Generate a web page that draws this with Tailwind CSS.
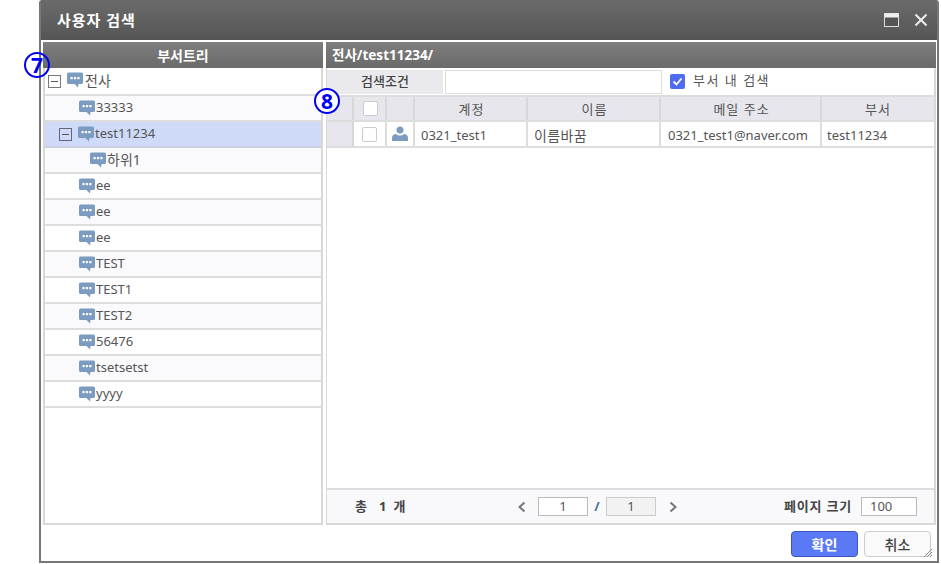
<!DOCTYPE html>
<html lang="ko">
<head>
  <meta charset="UTF-8"/>
  <title>사용자 검색</title>
  <script src="https://cdn.jsdelivr.net/npm/@tailwindcss/browser@4"></script>
</head>
<body class="bg-white w-[941px] h-[564px] overflow-hidden relative font-['Noto_Sans','Noto_Sans_CJK_KR',sans-serif] text-[13px] text-[#555]">
  <svg width="0" height="0" class="absolute">
    <symbol id="chat" viewBox="0 0 16 16">
      <path d="M1.500 0.500h13a1.500 1.500 0 0 1 1.500 1.500v8.500a1.500 1.500 0 0 1-1.500 1.500h-3l-.5 3.500-3.500-3.500h-6a1.500 1.500 0 0 1-1.500-1.500v-8.500a1.500 1.500 0 0 1 1.500-1.500z" fill="#7b9cc0"/>
      <rect x="3.500" y="5" width="2.200" height="2.200" fill="#fff"/><rect x="6.900" y="5" width="2.200" height="2.200" fill="#fff"/><rect x="10.300" y="5" width="2.200" height="2.200" fill="#fff"/>
    </symbol>
  </svg>

  <!-- Dialog -->
  <div class="ml-[39px] w-[900px] h-[563px] border-2 border-t-0 border-[#777] rounded-t-[3px] bg-white flex flex-col">
    <div class="h-[40px] shrink-0 bg-gradient-to-b from-[#6b6b6b] to-[#555] flex items-center justify-between pl-[16px] pr-[9px]">
      <span class="text-white font-bold text-[15px] tracking-[1px]">사용자 검색</span>
      <div class="flex items-center gap-[15px]">
        <svg width="15" height="14" viewBox="0 0 15 14"><rect x="0.500" y="0.500" width="14" height="13" fill="#555" stroke="#ddd"/><rect x="0.500" y="0.500" width="14" height="4" fill="#eee"/></svg>
        <svg width="14" height="14" viewBox="0 0 14 14"><path d="M1.500 1.500l11 11M12.500 1.500l-11 11" stroke="#eee" stroke-width="2"/></svg>
      </div>
    </div>

    <div class="flex-1 flex gap-[3px] pl-[2px] pr-px pt-[2px]">
      <!-- Tree -->
      <div class="w-[280px] shrink-0 h-[483px] border-2 border-t-0 border-[#d8d8d8] flex flex-col">
        <div class="h-[26px] -mx-[2px] shrink-0 bg-gradient-to-b from-[#7e7e7e] to-[#6a6a6a] text-white font-bold text-[14px] flex items-center justify-center">부서트리</div>
        <div class="h-[28px] shrink-0 border-b-2 border-[#ddd] flex items-center pl-[3px]">
          <span class="w-[13px] h-[13px] border border-[#777] flex items-center justify-center mr-[6px]"><span class="w-[7px] h-px bg-[#555]"></span></span>
          <svg width="16" height="16" class="mt-[-2px]"><use href="#chat"/></svg><span class="text-[14px] ml-[2px] -mt-[2px]">전사</span>
        </div>
        <div class="h-[26px] border-b-2 border-[#ddd] bg-[#fafafc] flex items-center pl-[34px]"><svg width="16" height="16"><use href="#chat"/></svg><span class="ml-px">33333</span></div>
        <div class="h-[26px] border-b-2 border-[#c9cfe0] bg-[#cfdaf8] flex items-center pl-[14px]">
          <span class="w-[13px] h-[13px] border border-[#667] flex items-center justify-center mr-[6px]"><span class="w-[7px] h-px bg-[#555]"></span></span>
          <svg width="16" height="16"><use href="#chat"/></svg><span class="ml-px">test11234</span>
        </div>
        <div class="h-[26px] border-b-2 border-[#ddd] bg-[#fafafc] flex items-center pl-[45px]"><svg width="16" height="16"><use href="#chat"/></svg><span class="ml-px text-[14px] -mt-[2px]">하위1</span></div>
        <div class="h-[26px] border-b-2 border-[#ddd] bg-white flex items-center pl-[34px]"><svg width="16" height="16"><use href="#chat"/></svg><span class="ml-px">ee</span></div>
        <div class="h-[26px] border-b-2 border-[#ddd] bg-[#fafafc] flex items-center pl-[34px]"><svg width="16" height="16"><use href="#chat"/></svg><span class="ml-px">ee</span></div>
        <div class="h-[26px] border-b-2 border-[#ddd] bg-white flex items-center pl-[34px]"><svg width="16" height="16"><use href="#chat"/></svg><span class="ml-px">ee</span></div>
        <div class="h-[26px] border-b-2 border-[#ddd] bg-[#fafafc] flex items-center pl-[34px]"><svg width="16" height="16"><use href="#chat"/></svg><span class="ml-px">TEST</span></div>
        <div class="h-[26px] border-b-2 border-[#ddd] bg-white flex items-center pl-[34px]"><svg width="16" height="16"><use href="#chat"/></svg><span class="ml-px">TEST1</span></div>
        <div class="h-[26px] border-b-2 border-[#ddd] bg-[#fafafc] flex items-center pl-[34px]"><svg width="16" height="16"><use href="#chat"/></svg><span class="ml-px">TEST2</span></div>
        <div class="h-[26px] border-b-2 border-[#ddd] bg-white flex items-center pl-[34px]"><svg width="16" height="16"><use href="#chat"/></svg><span class="ml-px">56476</span></div>
        <div class="h-[26px] border-b-2 border-[#ddd] bg-[#fafafc] flex items-center pl-[34px]"><svg width="16" height="16"><use href="#chat"/></svg><span class="ml-px">tsetsetst</span></div>
        <div class="h-[26px] border-b-2 border-[#ddd] bg-white flex items-center pl-[34px]"><svg width="16" height="16"><use href="#chat"/></svg><span class="ml-px">yyyy</span></div>
      </div>

      <!-- Right panel -->
      <div class="w-[610px] shrink-0 h-[483px] border-r-2 border-l border-b-2 border-[#d8d8d8] flex flex-col">
        <div class="h-[26px] -ml-px -mr-[2px] shrink-0 bg-gradient-to-b from-[#7e7e7e] to-[#6a6a6a] text-white font-bold text-[13.500px] flex items-center pl-[6px]">전사/test11234/</div>
        <div class="h-[27px] shrink-0 flex items-center">
          <div class="w-[116px] h-[24px] bg-[#eaeaee] text-[#444] font-medium flex items-center justify-center">검색조건</div>
          <div class="w-[217px] h-[24px] ml-[2px] border border-[#ddd] bg-white"></div>
          <span class="ml-[8px] w-[15px] h-[15px] rounded-[2px] bg-[#4f6cf0] flex items-center justify-center">
            <svg width="11" height="11" viewBox="0 0 11 11"><path d="M1.500 5.500l3 3 5-6" fill="none" stroke="#fff" stroke-width="1.800"/></svg>
          </span>
          <span class="ml-[8px] tracking-[1.500px] -mt-[2px]">부서 내 검색</span>
        </div>
        <!-- Grid -->
        <div class="grid grid-cols-[27px_33px_28px_113px_133px_161px_112px] w-[607px] border-y-2 border-[#ddd] text-[#555]">
          <div class="h-[23px] bg-[#e6e6ec] border-r-2 border-[#d8d8d8]"></div>
          <div class="h-[23px] bg-[#e6e6ec] border-r-2 border-[#d8d8d8] flex items-center justify-center pl-px"><span class="w-[15px] h-[15px] rounded-[2px] border border-[#ccc] bg-white"></span></div>
          <div class="h-[23px] bg-[#e6e6ec] border-r-2 border-[#d8d8d8]"></div>
          <div class="h-[23px] bg-[#e6e6ec] border-r-2 border-[#d8d8d8] flex items-center justify-center tracking-[1px] pt-[2px] pl-[2px]">계정</div>
          <div class="h-[23px] bg-[#e6e6ec] border-r-2 border-[#d8d8d8] flex items-center justify-center tracking-[1px] pt-[2px] pl-[2px]">이름</div>
          <div class="h-[23px] bg-[#e6e6ec] border-r-2 border-[#d8d8d8] flex items-center justify-center tracking-[1px] pt-[2px] pl-[2px]">메일 주소</div>
          <div class="h-[23px] bg-[#e6e6ec] border-[#d8d8d8] flex items-center justify-center tracking-[1px] pt-[2px]">부서</div>
        </div>
        <div class="grid grid-cols-[27px_33px_28px_113px_133px_161px_112px] w-[607px] border-b-2 border-[#ddd]">
          <div class="h-[24px] bg-[#e6e6ec] border-r-2 border-[#d8d8d8]"></div>
          <div class="h-[24px] border-r-2 border-[#ddd] flex items-center justify-center"><span class="w-[15px] h-[15px] rounded-[2px] border border-[#ccc] bg-white"></span></div>
          <div class="h-[24px] border-r-2 border-[#ddd] flex items-center justify-center">
            <svg width="16" height="16" viewBox="0 0 16 16"><circle cx="8" cy="4" r="3.500" fill="#7b9cc0"/><path d="M0 15v-3c0-2.500 2-4 4-4 1 1 2.500 1.500 4 1.500s3-.5 4-1.500c2 0 4 1.500 4 4v3z" fill="#7b9cc0"/></svg>
          </div>
          <div class="h-[24px] border-r-2 border-[#ddd] flex items-center pl-[6px] pt-[4px]">0321_test1</div>
          <div class="h-[24px] border-r-2 border-[#ddd] flex items-center pl-[6px] pt-[2px] text-[14px] tracking-[0.400px]">이름바꿈</div>
          <div class="h-[24px] border-r-2 border-[#ddd] flex items-center pl-[7px] pt-[4px]">0321_test1@naver.com</div>
          <div class="h-[24px] flex items-center pl-[5px] pt-[4px]">test11234</div>
        </div>
        <div class="flex-1"></div>
        <!-- Pager -->
        <div class="h-[35px] shrink-0 border-t-2 border-[#ddd] bg-[#f9f9fc] flex items-center">
          <div class="w-[190px] pl-[28px] flex items-center font-bold text-[#444]">
            <span>총</span><span class="ml-[12px]">1</span><span class="ml-[7px]">개</span>
          </div>
          <svg width="9" height="12" viewBox="0 0 9 12"><path d="M7.500 1.500L2.500 6l5 4.500" fill="none" stroke="#777" stroke-width="2"/></svg>
          <span class="ml-[12px] w-[50px] h-[19px] border border-[#bbb] bg-white text-center leading-[17px]">1</span>
          <span class="w-[18px] text-center text-[#4a6aa8] font-bold">/</span>
          <span class="w-[50px] h-[19px] border border-[#ccc] bg-[#f2f2f2] text-center leading-[17px]">1</span>
          <svg class="ml-[13px]" width="9" height="12" viewBox="0 0 9 12"><path d="M1.500 1.500L6.500 6l-5 4.500" fill="none" stroke="#777" stroke-width="2"/></svg>
          <div class="flex-1 flex items-center justify-end pr-[17px]">
            <span class="font-bold text-[#444] tracking-[0.800px]">페이지 크기</span>
            <span class="ml-[9px] w-[56px] h-[19px] border border-[#bbb] bg-white pl-[8px] leading-[17px]">100</span>
          </div>
        </div>
      </div>
    </div>

    <!-- Buttons -->
    <div class="flex justify-end gap-[6px] pr-[6px] pb-[4px]">
      <button class="w-[67px] h-[26px] rounded-[4px] border border-[#3a55c8] bg-[#5b78f5] text-white font-bold text-[14px]">확인</button>
      <button class="w-[67px] h-[26px] rounded-[4px] border border-[#ccc] bg-[#fafafa] text-[#444] font-medium text-[14px]">취소</button>
    </div>
  </div>

  <!-- Resize grip -->
  <svg class="absolute left-[923px] top-[548px]" width="10" height="10" viewBox="0 0 10 10"><path d="M9 1L1 9M9 4L4 9M9 7L7 9" stroke="#888" stroke-width="1"/></svg>

  <!-- Annotation markers -->
  <div class="absolute left-[24px] top-[52px] w-[26px] h-[26px] rounded-full border-2 border-[#0000f0] flex items-center justify-center text-[#0000f0] font-bold text-[21px] leading-none">7</div>
  <div class="absolute left-[314px] top-[88px] w-[26px] h-[26px] rounded-full border-2 border-[#0000f0] flex items-center justify-center text-[#0000f0] font-bold text-[21px] leading-none bg-white">8</div>
</body>
</html>
